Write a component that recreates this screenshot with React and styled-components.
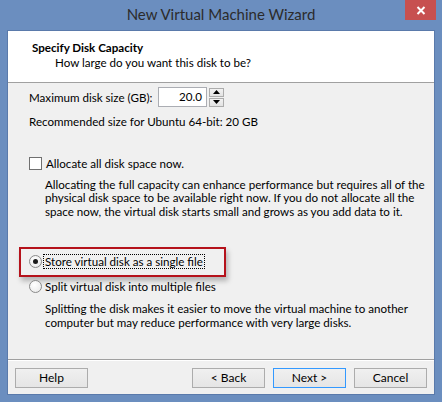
import React from "react";
import styled, { createGlobalStyle } from "styled-components";

const Global = createGlobalStyle`
  html, body { margin: 0; padding: 0; }
  body {
    width: 442px;
    height: 402px;
    overflow: hidden;
    font-family: Lato, "Noto Sans", sans-serif;
    font-size: 11.6px;
    color: #000;
  }
`;

const Frame = styled.div`
  width: 442px;
  height: 402px;
  box-sizing: border-box;
  background: #6b8ebf;
  padding: 0 7px 7px 7px;
  display: flex;
  flex-direction: column;
`;

const TitleBar = styled.div`
  height: 30px;
  display: grid;
  grid-template-columns: 1fr auto 1fr;
  align-items: start;
`;

const Caption = styled.div`
  grid-column: 2;
  font-size: 15px;
  line-height: 30px;
  color: #2b2b2b;
  margin-top: -1px;
`;

const CloseButton = styled.div`
  grid-column: 3;
  justify-self: end;
  width: 31px;
  height: 20px;
  margin-right: -1px;
  background: #c75050;
  display: flex;
  align-items: center;
  justify-content: center;
`;

const Client = styled.div`
  flex: 1;
  border: 1px solid #5a7aab;
  background: #f0f0f0;
  display: flex;
  flex-direction: column;
`;

const Header = styled.div`
  height: 52px;
  background: #fff;
  border-bottom: 1px solid #a0a0a0;
  box-sizing: border-box;
  padding: 9px 0 0 24px;
`;

const HeaderTitle = styled.div`
  font-weight: bold;
  line-height: 16px;
`;

const HeaderSub = styled.div`
  line-height: 16px;
  padding-left: 23px;
  margin-top: -1px;
`;

const Body = styled.div`
  flex: 1;
  padding: 4px 0 0 21px;
  display: flex;
  flex-direction: column;
`;

const FieldRow = styled.div`
  display: flex;
  align-items: center;
  height: 20px;
`;

const FieldLabel = styled.span`
  width: 129px;
  white-space: nowrap;
`;

const NumberBox = styled.div`
  width: 49px;
  height: 20px;
  box-sizing: border-box;
  border: 1px solid #abadb3;
  background: #fff;
  text-align: right;
  padding-right: 4px;
  line-height: 18px;
`;

const Spinner = styled.div`
  margin-left: 2px;
  width: 15px;
  height: 19px;
  display: flex;
  flex-direction: column;
  gap: 1px;
`;

const SpinPart = styled.div`
  flex: 1;
  border: 1px solid #acacac;
  background: linear-gradient(#f2f2f2, #e3e3e3);
  display: flex;
  align-items: center;
  justify-content: center;
`;

const Text = styled.div`
  line-height: 16px;
  margin-top: ${(p) => p.$top || 0}px;
`;

const Para = styled.p`
  margin: ${(p) => p.$top || 0}px 0 0 0;
  padding-left: 16px;
  line-height: 13.4px;
  white-space: nowrap;
`;

const Option = styled.label`
  position: relative;
  display: flex;
  align-items: center;
  height: 16px;
  margin-top: ${(p) => p.$top || 0}px;
`;

const CheckBox = styled.span`
  width: 13px;
  height: 13px;
  box-sizing: border-box;
  border: 1px solid #707070;
  background: #fff;
  margin-right: 3px;
`;

const Radio = styled.span`
  width: 13px;
  height: 13px;
  box-sizing: border-box;
  border-radius: 50%;
  border: 1px solid #8a8a8a;
  background: radial-gradient(circle at 40% 35%, #ffffff, #e6e6e6);
  margin-right: 2px;
  display: flex;
  align-items: center;
  justify-content: center;
  &::after {
    content: "";
    display: ${(p) => (p.$on ? "block" : "none")};
    width: 5px;
    height: 5px;
    border-radius: 50%;
    background: #1a1a1a;
  }
`;

const OptionText = styled.span`
  outline: ${(p) => (p.$focus ? "1px dotted #000" : "none")};
  outline-offset: 0;
  padding: 0 1px;
  line-height: 13px;
`;

const Highlight = styled.span`
  position: absolute;
  left: -10px;
  top: -6px;
  width: 207px;
  height: 30px;
  box-sizing: border-box;
  border: 2px solid #b5121b;
  box-shadow: 2px 4px 5px rgba(0, 0, 0, 0.25);
  pointer-events: none;
`;

const Footer = styled.div`
  border-top: 1px solid #a0a0a0;
  box-shadow: inset 0 1px 0 #ffffff;
  height: 35px;
  box-sizing: border-box;
  padding: 8px 7px 0 7px;
  display: flex;
  gap: 8px;
`;

const Spacer = styled.div`
  flex: 1;
`;

const Button = styled.button`
  width: 73px;
  height: 20px;
  box-sizing: border-box;
  padding: 0;
  font: inherit;
  font-size: 12px;
  color: #000;
  border: 1px solid ${(p) => (p.$default ? "#3399ff" : "#acacac")};
  background: linear-gradient(#f0f0f0, #e5e5e5);
  line-height: 18px;
`;

function CloseGlyph() {
  return (
    <svg width="10" height="9" viewBox="0 0 10 9">
      <path d="M1.5 1 L8.5 8 M8.5 1 L1.5 8" stroke="#fff" strokeWidth="2" />
    </svg>
  );
}

function Arrow({ up }) {
  return (
    <svg width="7" height="4" viewBox="0 0 7 4">
      <path d={up ? "M0 4 L3.5 0 L7 4 Z" : "M0 0 L7 0 L3.5 4 Z"} fill="#000" />
    </svg>
  );
}

export default function App() {
  return (
    <>
      <Global />
      <Frame>
        <TitleBar>
          <Caption>New Virtual Machine Wizard</Caption>
          <CloseButton>
            <CloseGlyph />
          </CloseButton>
        </TitleBar>
        <Client>
          <Header>
            <HeaderTitle>Specify Disk Capacity</HeaderTitle>
            <HeaderSub>How large do you want this disk to be?</HeaderSub>
          </Header>
          <Body>
            <FieldRow>
              <FieldLabel>Maximum disk size (GB):</FieldLabel>
              <NumberBox>20.0</NumberBox>
              <Spinner>
                <SpinPart>
                  <Arrow up />
                </SpinPart>
                <SpinPart>
                  <Arrow />
                </SpinPart>
              </Spinner>
            </FieldRow>
            <Text $top={7}>Recommended size for Ubuntu 64-bit: 20 GB</Text>
            <Option $top={25}>
              <CheckBox />
              <OptionText>Allocate all disk space now.</OptionText>
            </Option>
            <Para $top={7}>
              Allocating the full capacity can enhance performance but requires all of the
              <br />
              physical disk space to be available right now. If you do not allocate all the
              <br />
              space now, the virtual disk starts small and grows as you add data to it.
            </Para>
            <Option $top={35}>
              <Highlight />
              <Radio $on />
              <OptionText $focus>Store virtual disk as a single file</OptionText>
            </Option>
            <Option $top={9}>
              <Radio />
              <OptionText>Split virtual disk into multiple files</OptionText>
            </Option>
            <Para $top={8}>
              Splitting the disk makes it easier to move the virtual machine to another
              <br />
              computer but may reduce performance with very large disks.
            </Para>
          </Body>
          <Footer>
            <Button>Help</Button>
            <Spacer />
            <Button>&lt; Back</Button>
            <Button $default>Next &gt;</Button>
            <Button>Cancel</Button>
          </Footer>
        </Client>
      </Frame>
    </>
  );
}
